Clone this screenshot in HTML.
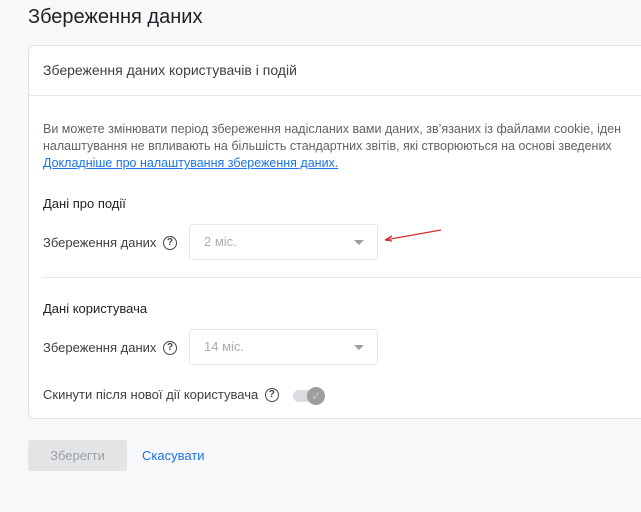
<!DOCTYPE html><html><head><meta charset="utf-8"><style>
body{margin:0;width:641px;height:512px;background:#f7f8f9;font-family:"Liberation Sans",sans-serif;position:relative;overflow:hidden;color:#3c4043}
.a{position:absolute;white-space:nowrap}
.card{position:absolute;left:28px;top:45px;width:640px;height:372px;background:#fff;border:1px solid #e3e4e6;border-radius:6px}
.sel{position:absolute;left:189px;width:187px;height:34px;border:1px solid #e6e7e8;border-radius:3px;background:#fff}
.sel span{position:absolute;left:14px;top:9px;font-size:13px;color:#a9acaf}
.sel i{position:absolute;left:164px;top:15px;border-left:5px solid transparent;border-right:5px solid transparent;border-top:5px solid #9aa0a6}
.q{display:inline-block;width:12px;height:12px;border:1.3px solid #444;border-radius:50%;font-size:10px;line-height:12px;text-align:center;font-weight:bold;color:#444;vertical-align:middle;margin-left:3px;margin-top:-2px}
</style></head><body>
<div class="a" style="left:28px;top:6px;font-size:20px;color:#202124">Збереження даних</div>
<div class="card"></div>
<div class="a" style="left:29px;top:95px;width:612px;height:1px;background:#e8e9ea"></div>
<div class="a" style="left:43px;top:62px;font-size:14px">Збереження даних користувачів і подій</div>
<div class="a" style="left:43px;top:121px;font-size:12.5px;line-height:17px;color:#5f6368">Ви можете змінювати період збереження надісланих вами даних, зв’язаних із файлами cookie, іден<br>налаштування не впливають на більшість стандартних звітів, які створюються на основі зведених<br><span style="color:#1a73e8;text-decoration:underline">Докладніше про налаштування збереження даних.</span></div>
<div class="a" style="left:43px;top:196px;font-size:13px;color:#202124">Дані про події</div>
<div class="a" style="left:43px;top:235px;font-size:13px">Збереження даних <span class="q">?</span></div>
<div class="sel" style="top:224px"><span>2 міс.</span><i></i></div>
<svg class="a" style="left:380px;top:225px" width="65" height="20"><path d="M61 5 L5 15" stroke="#d32f2f" stroke-width="1.3"/><path d="M5 15 L12 11 M5 15 L12 16" stroke="#d32f2f" stroke-width="1.3"/></svg>
<div class="a" style="left:42px;top:277px;width:600px;height:1px;background:#e8e9ea"></div>
<div class="a" style="left:43px;top:301px;font-size:13px;color:#202124">Дані користувача</div>
<div class="a" style="left:43px;top:340px;font-size:13px">Збереження даних <span class="q">?</span></div>
<div class="sel" style="top:329px"><span>14 міс.</span><i></i></div>
<div class="a" style="left:43px;top:387px;font-size:13px">Скинути після нової дії користувача <span class="q">?</span></div>
<div class="a" style="left:293px;top:390px;width:28px;height:12px;border-radius:6px;background:#dadce0"></div>
<div class="a" style="left:307px;top:387px;width:18px;height:18px;border-radius:50%;background:#9e9e9e;color:#ccc;font-size:12px;line-height:18px;text-align:center">✓</div>
<div class="a" style="left:28px;top:440px;width:99px;height:31px;background:#e3e4e5;border-radius:3px;color:#9aa0a6;font-size:13px;line-height:31px;text-align:center">Зберегти</div>
<div class="a" style="left:142px;top:448px;font-size:13px;color:#1a73e8">Скасувати</div>
</body></html>
